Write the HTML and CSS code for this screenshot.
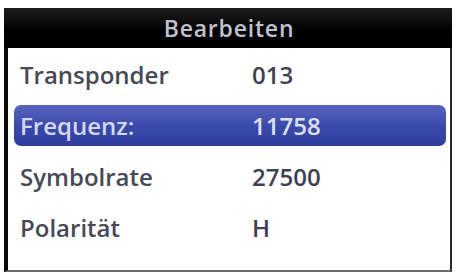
FILE: index.html
```html
<!DOCTYPE html>
<html lang="de">
<head>
<meta charset="utf-8">
<title>Bearbeiten</title>
<link rel="stylesheet" href="styles.css">
</head>
<body>
<div class="dialog">
  <div class="header">Bearbeiten</div>
  <div class="list">
    <div class="row"><span class="label">Transponder</span><span class="value">013</span></div>
    <div class="row selected"><span class="label">Frequenz:</span><span class="value">11758</span></div>
    <div class="row"><span class="label">Symbolrate</span><span class="value">27500</span></div>
    <div class="row"><span class="label">Polarität</span><span class="value">H</span></div>
  </div>
</div>
</body>
</html>
```
FILE: styles.css
```css
html, body {
  margin: 0;
  padding: 0;
  background: #ffffff;
}
body {
  padding: 8px 0 0 4px;
  font-family: "Open Sans", "DejaVu Sans", sans-serif;
}
.dialog {
  width: 442px;
  height: 262px;
  border-left: 4px solid #0a0a0a;
  border-right: 2px solid #2a2a2a;
  border-bottom: 2px solid #6a6a6a;
  background: #ffffff;
  display: flex;
  flex-direction: column;
}
.header {
  height: 40px;
  margin-left: -4px;
  margin-right: -2px;
  background: linear-gradient(#1c1c1c, #000000 60%);
  color: #bfc2cc;
  font-size: 23px;
  font-weight: 600;
  letter-spacing: 0.8px;
  display: flex;
  align-items: center;
  justify-content: center;
  padding-left: 2px;
}
.list {
  display: flex;
  flex-direction: column;
  gap: 10px;
  padding-top: 6px;
}
.row {
  height: 41px;
  margin: 0 4px 0 6px;
  padding-left: 6px;
  display: flex;
  align-items: center;
  font-size: 24px;
  font-weight: 600;
  color: #474a56;
  border-radius: 7px;
}
.row .label {
  width: 232px;
}
.row .value {
  color: #3e4150;
}
.row.selected {
  background: linear-gradient(#5865bf, #3c4aaa 50%, #2f3d9c);
  color: #d4d8f2;
}
.row.selected .value {
  color: #dde0f6;
}
```
